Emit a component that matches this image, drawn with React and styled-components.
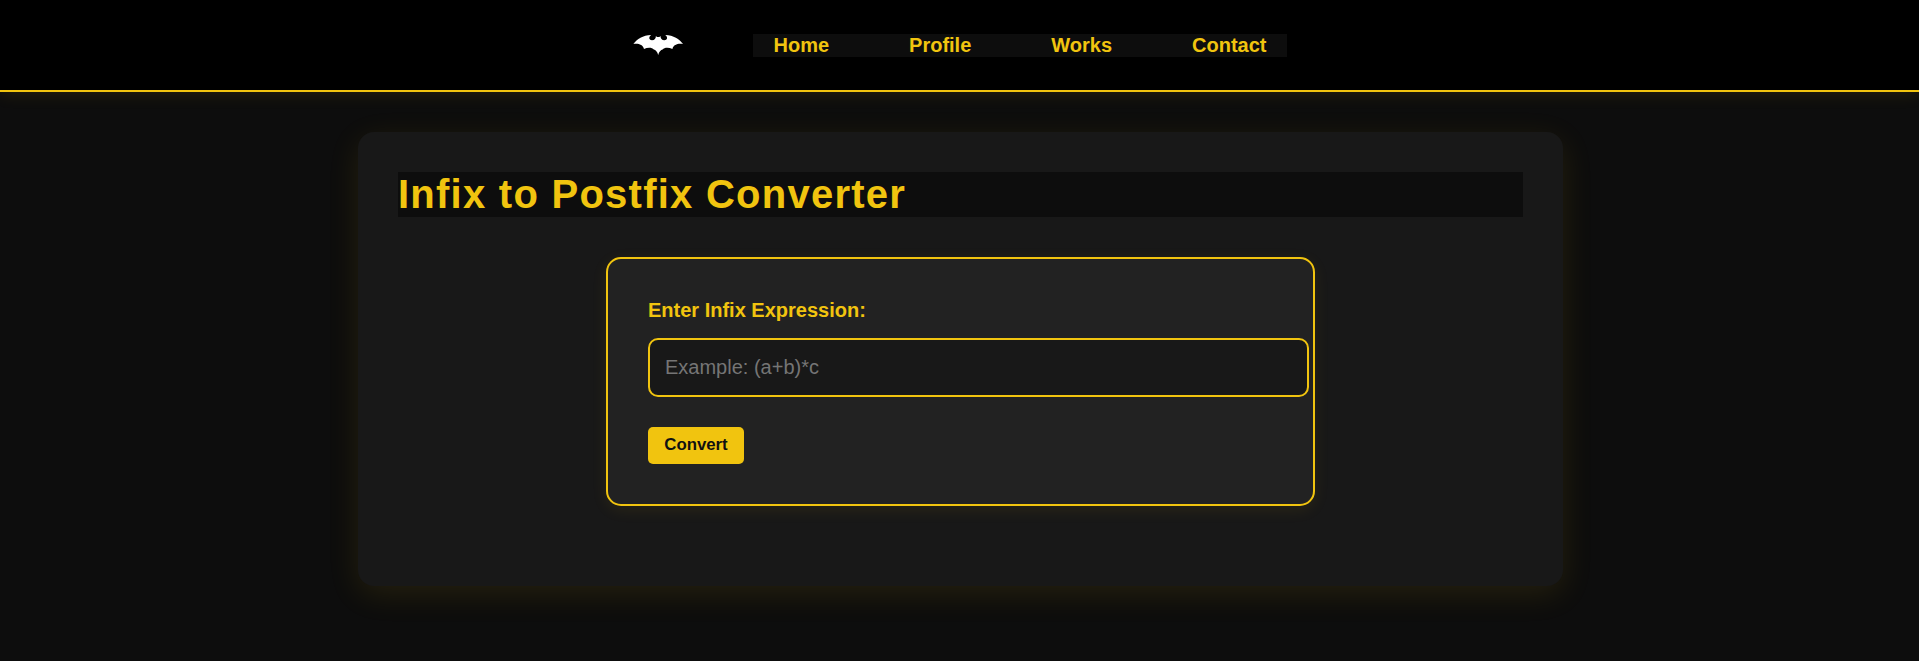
import React from "react";
import styled, { createGlobalStyle } from "styled-components";

const gold = "#f1c40f";

const GlobalStyle = createGlobalStyle`
  body {
    margin: 0;
    min-height: 661px;
    background: #0d0d0d;
    color: ${gold};
    font-family: "Liberation Sans", Arial, sans-serif;
  }
`;

const Header = styled.header`
  position: relative;
  display: flex;
  justify-content: center;
  align-items: center;
  gap: 70px;
  height: 90px;
  background: #000;
  border-bottom: 2px solid ${gold};
  box-shadow: 0 2px 16px rgba(241, 196, 15, 0.1);
`;

const Logo = styled.svg`
  display: block;
  width: 51px;
  height: 20px;
  fill: #fff;
`;

const NavList = styled.ul`
  display: flex;
  gap: 80px;
  margin: 0;
  padding: 0 20px;
  list-style: none;
  background: #0d0d0d;
`;

const NavLink = styled.a`
  display: block;
  color: ${gold};
  font-size: 20px;
  font-weight: bold;
  line-height: 23px;
  text-decoration: none;
`;

const Card = styled.main`
  width: 1125px;
  margin: 40px 356px 0 358px;
  padding: 40px;
  background: #181818;
  border-radius: 16px;
  box-shadow: 0 8px 32px rgba(241, 196, 15, 0.1);
`;

const Title = styled.h1`
  margin: 0 0 40px;
  background: #0d0d0d;
  font-size: 40px;
  line-height: 45px;
  letter-spacing: 1.25px;
`;

const Form = styled.form`
  width: 625px;
  margin: 0 auto 40px;
  padding: 40px;
  background: #222;
  border: 2px solid ${gold};
  border-radius: 15px;
  box-shadow: 0 4px 16px rgba(241, 196, 15, 0.08);
`;

const Label = styled.label`
  display: block;
  margin-bottom: 16px;
  font-size: 20px;
  font-weight: bold;
  line-height: 23px;
`;

const Input = styled.input`
  display: block;
  width: 100%;
  height: 23px;
  margin: 0 0 30px;
  padding: 16px 15px;
  box-sizing: content-box;
  padding-right: 17px;
  background: #181818;
  border: 2px solid ${gold};
  border-radius: 10px;
  color: ${gold};
  font: 20px "Liberation Sans", Arial, sans-serif;
  outline: none;

  &::placeholder {
    color: #757575;
  }
`;

const Button = styled.button`
  display: block;
  width: 96px;
  height: 37px;
  padding: 0 15px 2px;
  background: ${gold};
  border: 0;
  border-radius: 5px;
  color: #111;
  font: bold 16.8px "Liberation Sans", Arial, sans-serif;
`;

const links = ["Home", "Profile", "Works", "Contact"];

export default function App() {
  return (
    <>
      <GlobalStyle />
      <Header>
        <Logo viewBox="-0.7 0 51 20" aria-label="Logo">
          <path d="M.7 9.1C4.3 4 10.2.5 18.4.1C15.4 2.4 16.4 5.2 19.3 5.2C21.9 5.2 23.2 3.7 23.2 1L24.3 2H26.7L27.8 1C27.8 3.7 29.1 5.2 31.7 5.2C34.6 5.2 35.6 2.4 32.6.1C40.8.5 46.7 4 50.3 9.1C45.5 8.3 41.1 9.3 39.7 13.9C36.2 12.5 31.6 12.3 29.9 14.6C28.1 15 26.3 17 25.5 20C24.7 17 22.9 15 21.1 14.6C19.4 12.3 14.8 12.5 11.3 13.9C9.9 9.3 5.5 8.3.7 9.1Z" />
        </Logo>
        <nav>
          <NavList>
            {links.map((name) => (
              <li key={name}>
                <NavLink href="#">{name}</NavLink>
              </li>
            ))}
          </NavList>
        </nav>
      </Header>
      <Card>
        <Title>Infix to Postfix Converter</Title>
        <Form onSubmit={(e) => e.preventDefault()}>
          <Label htmlFor="infix">Enter Infix Expression:</Label>
          <Input id="infix" type="text" placeholder="Example: (a+b)*c" />
          <Button type="submit">Convert</Button>
        </Form>
      </Card>
    </>
  );
}
